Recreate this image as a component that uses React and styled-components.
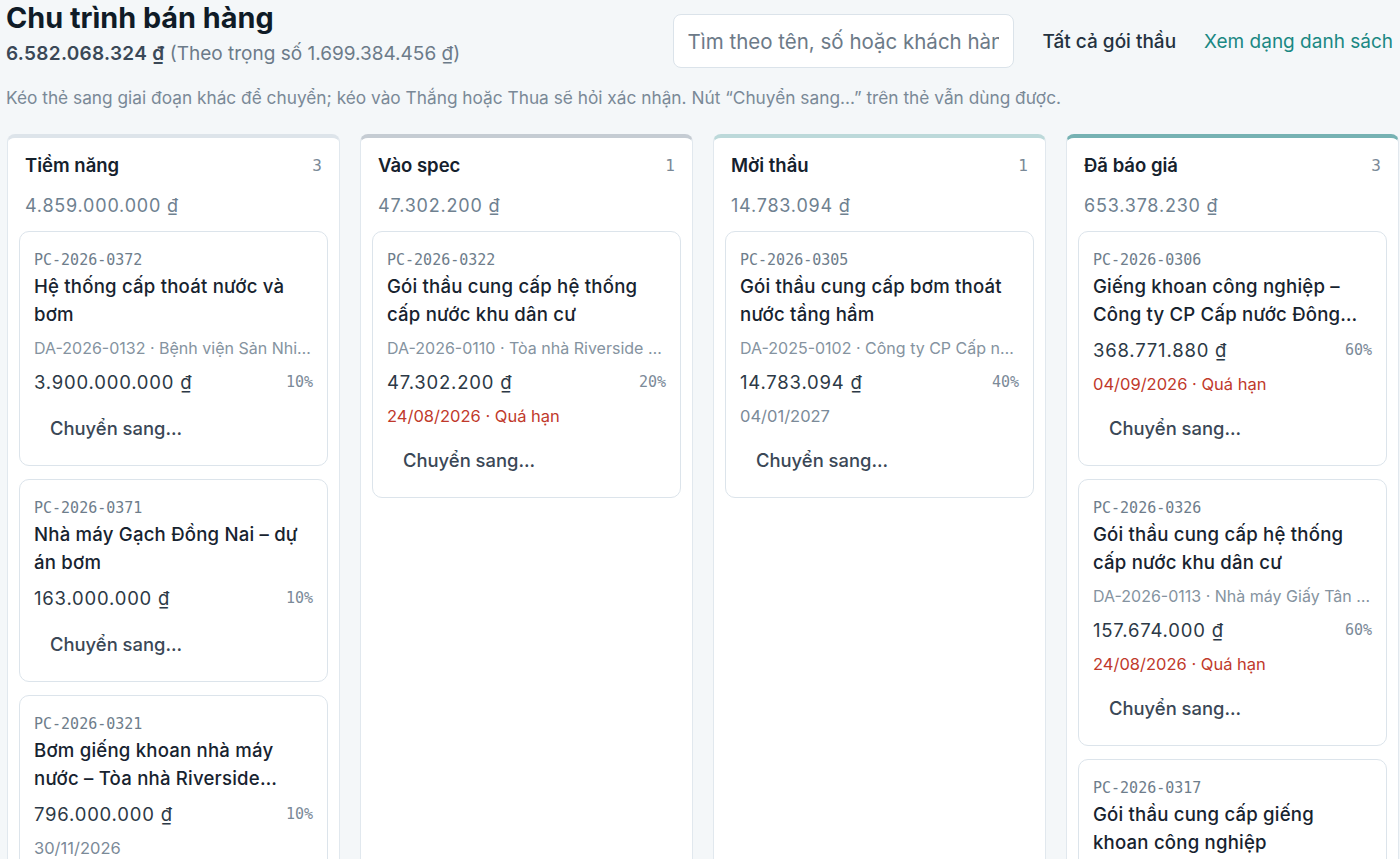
import React from "react";
import styled, { createGlobalStyle } from "styled-components";

const GlobalStyle = createGlobalStyle`
  html, body {
    margin: 0;
    padding: 0;
    background: #f4f7f9;
    font-family: Inter, "Noto Sans", sans-serif;
    color: #1a2530;
  }
  * { box-sizing: border-box; }
`;

const MONO = `"DejaVu Sans Mono", "Liberation Mono", monospace`;

const Page = styled.div`
  padding: 0 7px 0 6px;
  width: 1400px;
  overflow: hidden;
`;

const Header = styled.div`
  display: flex;
  justify-content: space-between;
  align-items: flex-start;
`;

const TitleBlock = styled.div`
  display: flex;
  flex-direction: column;
`;

const Title = styled.h1`
  margin: 0;
  font-size: 28.8px;
  line-height: 36px;
  font-weight: 700;
  color: #0f1b27;
`;

const Summary = styled.div`
  margin-top: 6px;
  font-size: 19px;
  line-height: 24px;
  color: #6c7b89;
  b {
    font-weight: 600;
    color: #3a4857;
    letter-spacing: 0.3px;
  }
`;

const Tools = styled.div`
  display: flex;
  align-items: center;
  gap: 28px;
  padding-top: 14px;
`;

const Search = styled.input`
  width: 341px;
  height: 54px;
  margin-right: 1px;
  border: 1px solid #dbe3ea;
  border-radius: 8px;
  background: #fff;
  padding: 0 14px;
  font-family: inherit;
  font-size: 20.5px;
  color: #1a2530;
  outline: none;
  &::placeholder { color: #6c7a88; }
`;

const Link = styled.a`
  font-size: 19px;
  font-weight: ${p => (p.$active ? 500 : 400)};
  color: ${p => (p.$active ? "#243240" : "#1a8883")};
  text-decoration: none;
  cursor: pointer;
  white-space: nowrap;
`;

const Hint = styled.p`
  margin: 18px 0 0;
  font-size: 17.3px;
  line-height: 24px;
  color: #7a8997;
`;

const Board = styled.div`
  display: flex;
  gap: 20px;
  margin-top: 24px;
  padding-left: 1px;
`;

const Column = styled.section`
  flex: 0 0 333px;
  min-width: 0;
  min-height: 760px;
  background: #fff;
  border: 1px solid #e1e8ee;
  border-top: 4px solid ${p => p.$tone};
  border-radius: 8px;
  padding: 12px 11px;
`;

const ColHead = styled.div`
  display: flex;
  justify-content: space-between;
  align-items: center;
  padding: 0 6px;
  height: 30px;
`;

const ColName = styled.h2`
  margin: 0;
  font-size: 18.5px;
  font-weight: 600;
  color: #15212d;
`;

const ColCount = styled.span`
  font-family: ${MONO};
  font-size: 16px;
  color: #7a8997;
`;

const ColTotal = styled.div`
  padding: 0 6px;
  margin: 14px 0 13px;
  font-size: 18px;
  letter-spacing: 0.8px;
  line-height: 24px;
  color: #6f8190;
`;

const CardList = styled.div`
  display: flex;
  flex-direction: column;
  gap: 13px;
`;

const Card = styled.article`
  background: #fff;
  border: 1px solid #dce4eb;
  border-radius: 10px;
  padding: 16px 14px 13px 14px;
  display: flex;
  flex-direction: column;
  gap: 8px;
`;

const Code = styled.div`
  font-family: ${MONO};
  font-size: 15px;
  line-height: 24px;
  color: #6e7d8b;
`;

const CardTitle = styled.div`
  font-size: 18.6px;
  letter-spacing: 0.2px;
  line-height: 28px;
  font-weight: 500;
  color: #17232f;
  display: -webkit-box;
  -webkit-line-clamp: 2;
  -webkit-box-orient: vertical;
  overflow: hidden;
`;

const Meta = styled.div`
  font-size: 16px;
  line-height: 24px;
  color: #8593a0;
  white-space: nowrap;
  overflow: hidden;
  text-overflow: ellipsis;
`;

const AmountRow = styled.div`
  display: flex;
  justify-content: space-between;
  align-items: center;
  height: 28px;
`;

const Amount = styled.span`
  font-size: 18.5px;
  letter-spacing: 0.8px;
  color: #2c3946;
`;

const Pct = styled.span`
  font-family: ${MONO};
  font-size: 15px;
  color: #7b8a98;
`;

const Due = styled.div`
  font-size: 16.5px;
  line-height: 24px;
  color: ${p => (p.$late ? "#c0392b" : "#7b8a98")};
`;

const MoveButton = styled.button`
  align-self: flex-start;
  height: 48px;
  padding: 0 16px;
  border: none;
  background: transparent;
  font-family: inherit;
  font-size: 18.4px;
  font-weight: 500;
  color: #3a4756;
  cursor: pointer;
  text-align: left;
`;

const stages = [
  {
    name: "Tiềm năng",
    tone: "#dde4ea",
    total: "4.859.000.000 ₫",
    items: [
      { code: "PC-2026-0372", title: "Hệ thống cấp thoát nước và bơm", meta: "DA-2026-0132 · Bệnh viện Sản Nhi Đồng Nai", amount: "3.900.000.000 ₫", pct: "10%" },
      { code: "PC-2026-0371", title: "Nhà máy Gạch Đồng Nai – dự án bơm", amount: "163.000.000 ₫", pct: "10%" },
      { code: "PC-2026-0321", title: "Bơm giếng khoan nhà máy nước – Tòa nhà Riverside Quận 7", amount: "796.000.000 ₫", pct: "10%", due: "30/11/2026" },
    ],
  },
  {
    name: "Vào spec",
    tone: "#c5ccd3",
    total: "47.302.200 ₫",
    items: [
      { code: "PC-2026-0322", title: "Gói thầu cung cấp hệ thống cấp nước khu dân cư", meta: "DA-2026-0110 · Tòa nhà Riverside Quận 7", amount: "47.302.200 ₫", pct: "20%", due: "24/08/2026 · Quá hạn", late: true },
    ],
  },
  {
    name: "Mời thầu",
    tone: "#bcd9da",
    total: "14.783.094 ₫",
    items: [
      { code: "PC-2026-0305", title: "Gói thầu cung cấp bơm thoát nước tầng hầm", meta: "DA-2025-0102 · Công ty CP Cấp nước Đông Hòa", amount: "14.783.094 ₫", pct: "40%", due: "04/01/2027" },
    ],
  },
  {
    name: "Đã báo giá",
    tone: "#76b2b3",
    total: "653.378.230 ₫",
    items: [
      { code: "PC-2026-0306", title: "Giếng khoan công nghiệp – Công ty CP Cấp nước Đông Hòa", amount: "368.771.880 ₫", pct: "60%", due: "04/09/2026 · Quá hạn", late: true },
      { code: "PC-2026-0326", title: "Gói thầu cung cấp hệ thống cấp nước khu dân cư", meta: "DA-2026-0113 · Nhà máy Giấy Tân Mai", amount: "157.674.000 ₫", pct: "60%", due: "24/08/2026 · Quá hạn", late: true },
      { code: "PC-2026-0317", title: "Gói thầu cung cấp giếng khoan công nghiệp", amount: "126.932.350 ₫", pct: "60%" },
    ],
  },
];

function DealCard({ item }) {
  return (
    <Card>
      <div>
        <Code>{item.code}</Code>
        <CardTitle>{item.title}</CardTitle>
      </div>
      {item.meta && <Meta>{item.meta}</Meta>}
      <AmountRow>
        <Amount>{item.amount}</Amount>
        <Pct>{item.pct}</Pct>
      </AmountRow>
      {item.due && <Due $late={item.late}>{item.due}</Due>}
      <MoveButton>Chuyển sang...</MoveButton>
    </Card>
  );
}

export default function App() {
  return (
    <Page>
      <GlobalStyle />
      <Header>
        <TitleBlock>
          <Title>Chu trình bán hàng</Title>
          <Summary>
            <b>6.582.068.324 ₫</b> (Theo trọng số 1.699.384.456 ₫)
          </Summary>
        </TitleBlock>
        <Tools>
          <Search placeholder="Tìm theo tên, số hoặc khách hàng" />
          <Link $active>Tất cả gói thầu</Link>
          <Link>Xem dạng danh sách</Link>
        </Tools>
      </Header>
      <Hint>
        Kéo thẻ sang giai đoạn khác để chuyển; kéo vào Thắng hoặc Thua sẽ hỏi xác nhận. Nút “Chuyển sang...” trên thẻ vẫn dùng được.
      </Hint>
      <Board>
        {stages.map(s => (
          <Column key={s.name} $tone={s.tone}>
            <ColHead>
              <ColName>{s.name}</ColName>
              <ColCount>{s.items.length}</ColCount>
            </ColHead>
            <ColTotal>{s.total}</ColTotal>
            <CardList>
              {s.items.map(it => (
                <DealCard key={it.code} item={it} />
              ))}
            </CardList>
          </Column>
        ))}
      </Board>
    </Page>
  );
}
